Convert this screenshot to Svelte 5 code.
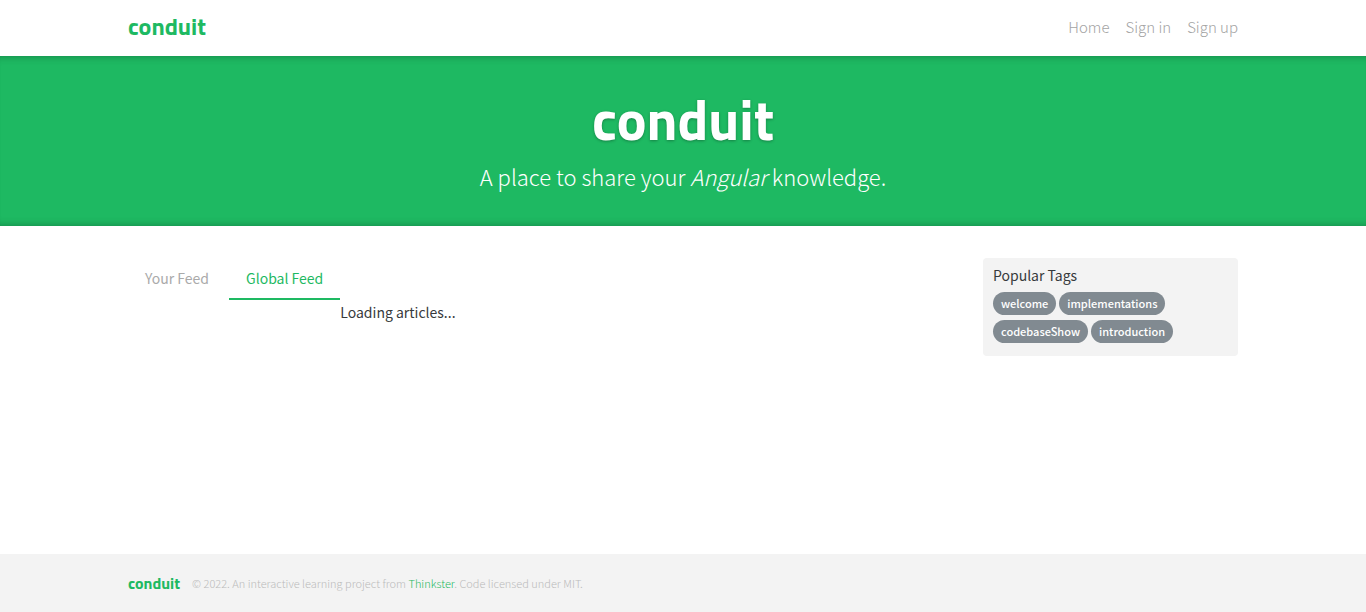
<script>
  const links = ['Home', 'Sign in', 'Sign up'];
  const tags = ['welcome', 'implementations', 'codebaseShow', 'introduction'];
  let feed = $state('Global Feed');
</script>

<div class="page">
  <header>
    <nav class="container bar">
      <a class="brand" href="#home">conduit</a>
      <ul class="links">
        {#each links as link}
          <li><a href="#home">{link}</a></li>
        {/each}
      </ul>
    </nav>
  </header>

  <section class="banner">
    <h1>conduit</h1>
    <p>A place to share your <em>Angular</em> knowledge.</p>
  </section>

  <main class="container content">
    <div class="feed">
      <div class="tabs">
        {#each ['Your Feed', 'Global Feed'] as name}
          <button class:active={feed === name} onclick={() => (feed = name)}>{name}</button>
        {/each}
      </div>
      <div class="status">Loading articles...</div>
    </div>
    <aside>
      <p>Popular Tags</p>
      <div class="tags">
        {#each tags as tag}
          <a href="#home">{tag}</a>
        {/each}
      </div>
    </aside>
  </main>

  <footer>
    <div class="container legal">
      <a class="brand" href="#home">conduit</a>
      <span>© 2022. An interactive learning project from <a href="#home">Thinkster</a>. Code licensed under MIT.</span>
    </div>
  </footer>
</div>

<style>
  :global(body) {
    margin: 0;
    background: #fff;
  }
  .page {
    min-height: 100vh;
    display: flex;
    flex-direction: column;
    color: #373a3c;
    font: 400 14px/24px "Source Sans Pro", "Noto Sans CJK SC", sans-serif;
  }
  a {
    color: inherit;
    text-decoration: none;
  }
  .container {
    box-sizing: border-box;
    width: 100%;
    max-width: 1140px;
    margin: 0 auto;
    padding: 0 15px;
  }
  .bar {
    display: flex;
    align-items: flex-start;
    justify-content: space-between;
    padding-top: 15px;
    padding-bottom: 17px;
  }
  .brand {
    color: #1eb962;
    font-family: "Titillium Web", "Noto Sans CJK SC", sans-serif;
    font-size: 16px;
    font-weight: 700;
  }
  .bar .brand {
    font-size: 24px;
    line-height: 22px;
  }
  .links {
    display: flex;
    gap: 16px;
    margin: 0;
    padding: 0;
    list-style: none;
    font-size: 15px;
    font-weight: 300;
    color: #a4a4a4;
  }
  .banner {
    padding: 32px;
    text-align: center;
    color: #fff;
    background: #1eb962;
    box-shadow: inset 0 8px 8px -8px rgba(0, 0, 0, 0.3), inset 0 -8px 8px -8px rgba(0, 0, 0, 0.3);
  }
  h1 {
    margin: 0 0 6px;
    font: 700 56px/64px "Titillium Web", "Noto Sans CJK SC", sans-serif;
    text-shadow: 0 1px 3px rgba(0, 0, 0, 0.3);
  }
  .banner p {
    margin: 0;
    font-size: 22px;
    line-height: 36px;
    font-weight: 300;
  }
  .content {
    flex: 1;
    display: flex;
    align-items: flex-start;
    gap: 30px;
    padding-top: 32px;
    padding-bottom: 32px;
  }
  .feed {
    flex: 1;
    display: grid;
    grid-template-columns: auto 1fr;
  }
  .tabs {
    display: flex;
    gap: 3px;
  }
  button {
    padding: 8px 17px;
    border: 0;
    border-bottom: 2px solid transparent;
    background: none;
    color: #aaa;
    font: inherit;
    cursor: pointer;
  }
  button.active {
    color: #1eb962;
    border-color: #1eb962;
  }
  .status {
    grid-row: 2;
    grid-column: 2;
  }
  aside {
    box-sizing: border-box;
    width: 255px;
    padding: 5px 10px 13px;
    border-radius: 4px;
    background: #f3f3f3;
  }
  aside p {
    margin: 0 0 5px;
  }
  .tags {
    display: flex;
    flex-wrap: wrap;
    gap: 5px 3px;
  }
  .tags a {
    padding: 0 8px;
    border-radius: 12px;
    background: #818a91;
    color: #fff;
    font-size: 11px;
    line-height: 23px;
    font-weight: 500;
  }
  footer {
    padding: 16px 0;
    background: #f3f3f3;
  }
  .legal {
    display: flex;
    align-items: center;
    gap: 12px;
    line-height: 26px;
  }
  .legal span {
    font-size: 11px;
    font-weight: 300;
    color: #bbb;
  }
  .legal span a {
    color: #1eb962;
  }
</style>
